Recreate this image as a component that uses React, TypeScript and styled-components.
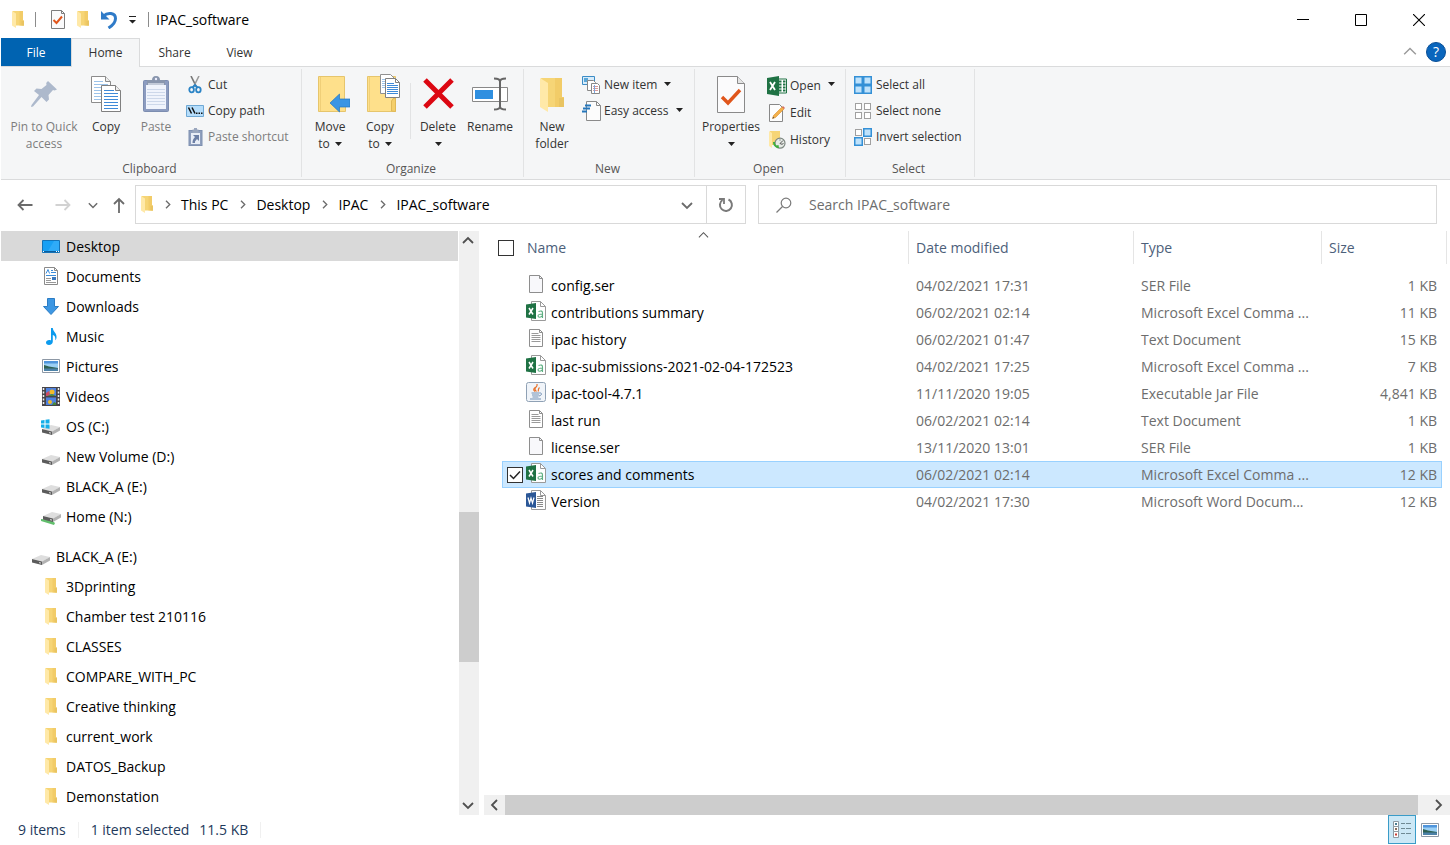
import React from "react";
import styled, { createGlobalStyle, css } from "styled-components";

const GlobalStyle = createGlobalStyle`
  *, *::before, *::after { box-sizing: border-box; }
  body { margin: 0; background: #fff; color: #000; }
  body, button, input { font-family: "Open Sans", "Noto Sans", sans-serif; font-size: 14px; line-height: 20px; }
  h1, h2 { margin: 0; font-weight: 400; font-size: inherit; }
  ul { margin: 0; padding: 0; list-style: none; }
  svg { display: block; flex: none; }
`;

/* ---------- icons ---------- */

const Folder = ({ w = 12, h = 17 }: { w?: number; h?: number }) => (
  <svg width={w} height={h} viewBox="0 0 24 34" aria-hidden="true">
    <path d="M1 0h21v19h2v10H7z" fill="#f6d576" />
    <path d="M15 0h7v19h2v10h-9z" fill="#f2cc68" />
    <path d="M19 20h5v9h-5z" fill="#e9c462" />
    <path d="M0 0l8 5v29l-8-5z" fill="#ffe9a8" />
  </svg>
);

const PropertiesIcon = () => (
  <svg width="30" height="37" viewBox="0 0 30 37" aria-hidden="true">
    <path d="M1.500.5h20l7 7v29h-27z" fill="#fbfbfc" stroke="#8a8a8a" />
    <path d="M21.500.5v7h7" fill="#e4e4e4" stroke="#8a8a8a" />
    <path d="M6 21l6 6 12-13" fill="none" stroke="#e0561c" strokeWidth="3.400" />
  </svg>
);

const QuickProperties = () => (
  <svg width="16" height="19" viewBox="0 0 16 19" aria-hidden="true">
    <path d="M1.500.5h10l3 3v15h-13z" fill="#fafafb" stroke="#7d7d7d" />
    <path d="M11.500.5v3h3" fill="none" stroke="#7d7d7d" />
    <path d="M3.500 10l3 3L12 6.500" fill="none" stroke="#e0561c" strokeWidth="2" />
  </svg>
);

const UndoIcon = () => (
  <svg width="18" height="19" viewBox="0 0 18 19" aria-hidden="true">
    <path d="M3.500 6C7.500 2 15.500 2.500 15.500 8.500c0 4-3 7-7 9.500" fill="none" stroke="#2f7bc8" strokeWidth="3" />
    <path d="M1 1v8.500h8.500z" fill="#2f7bc8" />
  </svg>
);

const CaretDown = () => (
  <svg width="7" height="4" viewBox="0 0 7 4" aria-hidden="true">
    <path d="M0 0h7L3.500 4z" fill="#222" />
  </svg>
);

const CustomizeIcon = () => (
  <svg width="7" height="8" viewBox="0 0 7 8" aria-hidden="true">
    <path d="M0 0h7v1H0zM0 4h7L3.500 7.500z" fill="#222" />
  </svg>
);

const PinIcon = () => (
  <svg width="28" height="30" viewBox="-1 0 28 30" aria-hidden="true">
    <path d="M17 1l9 8.500-2.500 1-1.500-.5-4.500 5 .5 4.500-2.500 2.500-5-5L2 26.500l-2 .5.500-2L8 15l-5-4L5.500 8.500l5 .5L15.500 5 15.200 3z" fill="#adb9cc" />
  </svg>
);

const sheetLines = (x: number, y: number, w: number, n: number, step: number, color: string) =>
  Array.from({ length: n }, (_, i) => <path key={i} d={`M${x} ${y + i * step}h${w}`} stroke={color} />);

const CopyIcon = () => (
  <svg width="32" height="37" viewBox="-1 0 32 37" aria-hidden="true">
    <path d="M.5.5h14l5 5v21H.5z" fill="#fff" stroke="#8c8c8c" />
    <path d="M14.500.5v5h5" fill="#eee" stroke="#8c8c8c" />
    {sheetLines(3, 5.5, 9, 1, 3, "#9cc3ea")}
    {sheetLines(3, 8.5, 14, 6, 3, "#9cc3ea")}
    <path d="M10.500 9.500h14l5 5v21h-19z" fill="#fff" stroke="#808080" />
    <path d="M24.500 9.500v5h5" fill="#eee" stroke="#808080" />
    {sheetLines(13, 14.5, 10, 1, 3, "#3f8ad8")}
    {sheetLines(13, 17.5, 14, 6, 3, "#3f8ad8")}
  </svg>
);

const PasteIcon = () => (
  <svg width="28" height="37" viewBox="-1 0 28 37" aria-hidden="true">
    <rect x=".5" y="4.500" width="25" height="31" rx="1" fill="#8c9cc0" stroke="#7c8db0" />
    <path d="M3 9h20v24H3z" fill="#f0f4fc" />
    {sheetLines(4, 13.5, 18, 6, 3, "#cdd8ea")}
    <path d="M4 4h5c0-2 1-4 4-4s4 2 4 4h5v5H4z" fill="#8996ad" />
    <path d="M5 8h16" stroke="#c3cbd9" strokeWidth="2" />
    <circle cx="13" cy="3" r="1.200" fill="#eef" />
  </svg>
);

const CutIcon = () => (
  <svg width="14" height="18" viewBox="0 0 14 18" aria-hidden="true">
    <path d="M3 0l5.500 11" stroke="#777" strokeWidth="1.600" />
    <path d="M11 0L5.500 11" stroke="#9a9a9a" strokeWidth="1.600" />
    <ellipse cx="3.600" cy="13.800" rx="2.300" ry="2.600" fill="none" stroke="#2b84c6" strokeWidth="1.800" />
    <ellipse cx="10.400" cy="13.800" rx="2.300" ry="2.600" fill="none" stroke="#2b84c6" strokeWidth="1.800" />
    <path d="M4.500 11.500L7 9l2.500 2.500" fill="none" stroke="#2b84c6" strokeWidth="1.800" />
  </svg>
);

const CopyPathIcon = () => (
  <svg width="18" height="12" viewBox="0 0 18 12" aria-hidden="true">
    <path d="M.5.5h17v11H.5z" fill="#b5ddfb" stroke="#6ea8d4" />
    <path d="M2.500 2.500l3 6M6 2.500l3 6" stroke="#111" strokeWidth="1.500" />
    <path d="M10 7.500h1.500v1.500H10zM12.500 7.500H14v1.500h-1.500zM15 7.500h1.500v1.500H15z" fill="#111" />
  </svg>
);

const PasteShortcutIcon = () => (
  <svg width="15" height="18" viewBox="0 0 15 18" aria-hidden="true">
    <rect x="1" y="2.500" width="13" height="15" fill="#8f9fbd" stroke="#7e90b1" />
    <path d="M3 5h9v11H3z" fill="#e9eef7" />
    <path d="M4.500 1.500h6V5h-6z" fill="#9aa7be" />
    <path d="M6 0h3v2H6z" fill="#9aa7be" />
    <path d="M5 7h6v6L9 11 7 13.500v1.500H4.500c0-3 1-4.500 2.500-6z" fill="#6d80a6" />
  </svg>
);

const MoveToIcon = () => (
  <svg width="40" height="37" viewBox="-8 0 40 37" aria-hidden="true">
    <path d="M.5.5h26v23h1v12H.5z" fill="#fee08b" stroke="#e6c56c" />
    <path d="M2.500 1v34" stroke="#f0cf78" />
    <path d="M12 27l9.500-9v5H32v8H21.500v5z" fill="#3a95e4" stroke="#2577bf" strokeWidth=".7" />
  </svg>
);

const CopyToIcon = () => (
  <svg width="42" height="41" viewBox="-8 0 42 41" aria-hidden="true">
    <path d="M.5 2.500h28v35H.5z" fill="#fee08b" stroke="#e6c56c" />
    <path d="M2.500 3v34" stroke="#f0cf78" />
    <path d="M24.500 37V27q1-3 4-3v13.500z" fill="#f5cf6b" stroke="#e0b958" />
    <path d="M13.500.5h10l4 4v15h-14z" fill="#fff" stroke="#909090" />
    {sheetLines(15, 5.5, 8, 5, 2, "#9cc3ea")}
    <path d="M18.500 4.500h10l4 4v15h-14z" fill="#fff" stroke="#808080" />
    <path d="M28.500 4.500v4h4" fill="none" stroke="#808080" />
    {sheetLines(20, 9.5, 7, 1, 2, "#3f8ad8")}
    {sheetLines(20, 11.5, 11, 5, 2, "#3f8ad8")}
  </svg>
);

const DeleteIcon = () => (
  <svg width="34" height="34" viewBox="-1 1 34 34" aria-hidden="true">
    <path d="M3 3l27 27M30 3L3 30" stroke="#dc0712" strokeWidth="5" />
  </svg>
);

const RenameIcon = () => (
  <svg width="38" height="36" viewBox="-1 0 38 36" aria-hidden="true">
    <path d="M.5 10.500h35v14H.5z" fill="#fff" stroke="#888" />
    <path d="M3 13h18v9H3z" fill="#2f8fe0" />
    <path d="M22 1.500c4 0 6 1 6 3v25c0 2-2 3-6 3M34 1.500c-4 0-6 1-6 3v25c0 2 2 3 6 3" fill="none" stroke="#666" strokeWidth="2" />
  </svg>
);

const NewItemIcon = () => (
  <svg width="18" height="18" viewBox="0 0 18 18" aria-hidden="true">
    <path d="M.5.5h12v8H.5z" fill="#d8ecfa" stroke="#3c8cc6" />
    <path d="M2 2h4v4H2z" fill="#5aa7d8" />
    <path d="M5.500 4.500h6l2 2v8h-8z" fill="#fff" stroke="#888" />
    <path d="M9.500 7.500h6l2 2v8h-8z" fill="#fff" stroke="#888" />
    {sheetLines(11, 10.5, 5, 3, 2, "#d99a9a")}
    <path d="M12.500 9v8" stroke="#7aa7df" />
  </svg>
);

const EasyAccessIcon = () => (
  <svg width="19" height="20" viewBox="0 0 19 20" aria-hidden="true">
    <path d="M4.500.5h10l4 4v15h-14z" fill="#fcfcfc" stroke="#8a8a8a" />
    <path d="M14.500.5v4h4" fill="none" stroke="#8a8a8a" />
    <path d="M3 4.500h6M1 7.500h7M0 10.500h5" stroke="#2576bb" strokeWidth="1.800" />
  </svg>
);

const ExcelApp = () => (
  <svg width="20" height="20" viewBox="0 0 20 20" aria-hidden="true">
    <path d="M10 3h9.500v14H10z" fill="#fff" stroke="#1f7244" />
    <path d="M12 5.500h2.500M16 5.500h2.500M12 8.500h2.500M16 8.500h2.500M12 11.500h2.500M16 11.500h2.500M12 14.500h2.500M16 14.500h2.500" stroke="#1f7244" strokeWidth="1.800" />
    <path d="M0 2l12-2v20L0 18z" fill="#1f7244" />
    <path d="M3 6l5 8M8 6l-5 8" stroke="#fff" strokeWidth="1.800" />
  </svg>
);

const EditIcon = () => (
  <svg width="16" height="18" viewBox="0 0 16 18" aria-hidden="true">
    <path d="M.5.5h10l3 3v14H.5z" fill="#fdfdfd" stroke="#888" />
    <path d="M3.500 14.500l1-3L13 3l2 2-8.500 8.500z" fill="#f3b04a" stroke="#d88d28" strokeWidth=".6" />
    <path d="M3.500 14.500l.6-1.800 1.200 1.200z" fill="#444" />
    <path d="M13 3l1-1 2 2-1 1z" fill="#d86b5b" />
  </svg>
);

const HistoryIcon = () => (
  <svg width="17" height="18" viewBox="0 0 17 18" aria-hidden="true">
    <path d="M1 0h10v14H1z" fill="#f6d576" />
    <path d="M0 0l3 2v15l-3-2z" fill="#ffe9a8" />
    <circle cx="11" cy="12.200" r="5" fill="#e6ebe6" stroke="#7d8780" strokeWidth="1.200" />
    <path d="M14 9.500l-3 3 2.500 1M11 8.500v1M14.500 12.500h-1" fill="none" stroke="#555" />
    <path d="M4 11c0 4 3 6 6 6l-.5-3-2 .5C6 13.500 6 12.500 6 11z" fill="#3fae3f" />
  </svg>
);

const SelectIcon = ({ on }: { on: [boolean, boolean, boolean, boolean] }) => (
  <svg width="18" height="18" viewBox="0 0 18 18" aria-hidden="true">
    {on.map((active, i) => {
      const x = (i % 2) * 9;
      const y = Math.floor(i / 2) * 9;
      return active ? (
        <rect key={i} x={x + 0.75} y={y + 0.75} width="7.500" height="7.500" fill="#bfe2fb" stroke="#3490d6" strokeWidth="1.500" />
      ) : (
        <rect key={i} x={x + 1.5} y={y + 1.5} width="6" height="6" fill="#fff" stroke="#a0a0a0" />
      );
    })}
  </svg>
);

const Arrow = ({ dir, color = "#6b6b6b" }: { dir: "left" | "right" | "up"; color?: string }) => (
  <svg width="16" height="16" viewBox="0 0 16 16" aria-hidden="true">
    <path
      d={dir === "left" ? "M15.500 8H1.500M6.500 3l-5 5 5 5" : dir === "right" ? "M.5 8h14M9.500 3l5 5-5 5" : "M8 16V2M3 7l5-5 5 5"}
      fill="none"
      stroke={color}
      strokeWidth="1.800"
    />
  </svg>
);

const chevrons = { up: "M1 8l5-5 5 5", down: "M1 4l5 5 5-5", left: "M8 1L3 6l5 5", right: "M4 1l5 5-5 5" };
const Chevron = ({ dir, size = 12, color = "#6b6b6b", weight = 1.8 }: { dir: keyof typeof chevrons; size?: number; color?: string; weight?: number }) => (
  <svg width={size} height={size} viewBox="0 0 12 12" aria-hidden="true">
    <path d={chevrons[dir]} fill="none" stroke={color} strokeWidth={weight} />
  </svg>
);

const RefreshIcon = () => (
  <svg width="16" height="16" viewBox="0 0 16 16" aria-hidden="true">
    <path d="M10.500 2.500a6 6 0 1 1-6 .5" fill="none" stroke="#7a7a7a" strokeWidth="2" />
    <path d="M1 2h5v5" fill="none" stroke="#7a7a7a" strokeWidth="1.800" />
  </svg>
);

const SearchIcon = () => (
  <svg width="16" height="16" viewBox="0 0 16 16" aria-hidden="true">
    <circle cx="10" cy="6" r="4.800" fill="none" stroke="#7a7a7a" strokeWidth="1.200" />
    <path d="M6.500 9.500L.5 15.500" stroke="#7a7a7a" strokeWidth="1.200" />
  </svg>
);

const DesktopIcon = () => (
  <svg width="18" height="13" viewBox="0 0 18 13" aria-hidden="true">
    <path d="M.5.5h17v12H.5z" fill="#18a0f4" stroke="#1473b8" />
    <path d="M12 1h5v10H6z" fill="#2fabf8" />
    <path d="M1 11.500h16" stroke="#0b5d9c" />
    <path d="M1 11.500h1M14 11.500h1M16 11.500h1" stroke="#fff" />
  </svg>
);

const DocumentIcon = () => (
  <svg width="14" height="18" viewBox="0 0 14 18" aria-hidden="true">
    <path d="M.5.5h10l3 3v14H.5z" fill="#fff" stroke="#8a8a8a" />
    <path d="M10.500.5v3h3" fill="none" stroke="#8a8a8a" />
    <path d="M2 6.500l2-4 1.500 4M7 3.500h2M7 5.500h5M2 8.500h10" fill="none" stroke="#3a8ddb" />
    <path d="M2 11.500h5M2 13.500h5M2 15.500h10" stroke="#999" />
    <path d="M8 10h4v3H8z" fill="#3a78bd" />
  </svg>
);

const DownloadIcon = () => (
  <svg width="16" height="17" viewBox="0 0 16 17" aria-hidden="true">
    <path d="M4.500.5h7v8h4L8 16.500.5 8.500h4z" fill="#3d97e3" stroke="#2b7cc4" />
  </svg>
);

const MusicIcon = () => (
  <svg width="11" height="17" viewBox="0 0 11 17" aria-hidden="true">
    <path d="M5 0h1.800C7 4 11 5 10.500 9.500c0 1-.5 2-1.200 2.800C9.800 9 8.500 7.500 6.800 7v6.500C6.800 15.500 5 17 3 17s-3-1-3-2.500S1.500 12 3.200 12c.7 0 1.300.1 1.800.4z" fill="#0c9bee" />
  </svg>
);

const PictureIcon = () => (
  <svg width="18" height="14" viewBox="0 0 18 14" aria-hidden="true">
    <path d="M.5.5h17v13H.5z" fill="#fff" stroke="#8d98a5" />
    <path d="M2 2h14v10H2z" fill="#9bd0f5" />
    <path d="M2 2h14v2.500H2z" fill="#4f95dc" />
    <path d="M2 6l5 1.500 9 1.500v1H2z" fill="#2e6153" />
    <path d="M2 9.500h14V12H2z" fill="#4c82a8" />
  </svg>
);

const VideoIcon = () => (
  <svg width="18" height="19" viewBox="0 0 18 19" aria-hidden="true">
    <path d="M0 0h18v19H0z" fill="#46444a" />
    <path d="M1.500 1v17M16.500 1v17" stroke="#eee" strokeWidth="1.500" strokeDasharray="2 1.500" />
    <path d="M4 1h10v8H4zM4 10.500h10V18H4z" fill="#4f82e0" />
    <circle cx="10" cy="5" r="2.500" fill="#f2bb2a" />
    <path d="M4 6l3-2 1 5H4z" fill="#cf4a63" />
    <circle cx="8" cy="15" r="2" fill="#f2bb2a" />
    <path d="M10 18l2-3 2 1v2zM5 9l5-2 4 2z" fill="#4a8a3a" />
  </svg>
);

const DriveIcon = ({ kind }: { kind?: "os" | "net" }) => (
  <svg width="20" height="20" viewBox="0 0 20 20" aria-hidden="true">
    {kind === "net" && <path d="M0 13l10 1 4 3-1 2-13-4z" fill="#62bf6d" />}
    <g transform={kind === "net" ? "translate(1 -3)" : undefined}>
      <path d="M1 13l9-4 9 2-8 4.500z" fill="#dedede" />
      <path d="M1 13l10 2.500V19L1 16.500z" fill="#5c5c5c" />
      <path d="M11 15.500l8-4.500v3.500L11 19z" fill="#b2b2b2" />
      <path d="M8 16.600l2 .5" stroke="#ddd" />
    </g>
    {kind === "os" && <path d="M0 4.500l3.500-.5v3.500H0zM4.500 3.800l4-.6v4.300h-4zM0 8.500h3.500V12L0 11.500zM4.500 8.500h4v4.200l-4-.5z" fill="#14aee8" />}
  </svg>
);

const FileSheet = ({ text }: { text?: boolean }) => (
  <svg width="14" height="18" viewBox="0 0 14 18" aria-hidden="true">
    <path d="M.5.5h10l3 3v14H.5z" fill={text ? "#fff" : "#f8f8fb"} stroke="#8e8e8e" />
    <path d="M10.500.5v3h3" fill="none" stroke="#8e8e8e" />
    {text && sheetLines(2.5, 4.5, 7, 1, 2, "#9a9a9a")}
    {text && sheetLines(2.5, 6.5, 9, 4, 2, "#9a9a9a")}
  </svg>
);

const CsvIcon = () => (
  <svg width="20" height="20" viewBox="0 0 20 20" aria-hidden="true">
    <path d="M5.500.5h9l5 5v14h-14z" fill="#fff" stroke="#9a9a9a" />
    <path d="M14.500.5v5h5" fill="none" stroke="#9a9a9a" />
    <path d="M0 3.500L10 2v16L0 16.500z" fill="#1f7244" />
    <path d="M3 7l4 6.500M7 7l-4 6.500" stroke="#fff" strokeWidth="1.500" />
    <path d="M12.500 10.500q4-1.500 4 1.500v5M16.500 13c-3 0-4.500.5-4.500 2s3 2 4.500-.5" fill="none" stroke="#5cae80" strokeWidth="1.100" />
  </svg>
);

const WordIcon = () => (
  <svg width="20" height="20" viewBox="0 0 20 20" aria-hidden="true">
    <path d="M5.500.5h9l5 5v14h-14z" fill="#fff" stroke="#9a9a9a" />
    <path d="M14.500.5v5h5" fill="none" stroke="#9a9a9a" />
    {sheetLines(11, 6.5, 6, 6, 2, "#8a8a8a")}
    <path d="M0 3.500L10 2v16L0 16.500z" fill="#2b5797" />
    <path d="M2 7.500l1.500 5.500L5 8l1.500 5L8 7.500" fill="none" stroke="#fff" strokeWidth="1.200" />
  </svg>
);

const JarIcon = () => (
  <svg width="20" height="20" viewBox="0 0 20 20" aria-hidden="true">
    <rect x=".5" y=".5" width="19" height="19" rx="2" fill="#f0f4f9" stroke="#8fa1b5" />
    <path d="M10.500 9.500C8 7.500 9 6 10.500 4.500 11.500 3.500 11 2.500 11 2M9 9.500C6.500 8 8 6.500 9.500 5.200M12 9.500c1-1.500-.5-2 1.500-4" fill="none" stroke="#e8732c" strokeWidth="1.200" />
    <path d="M5.500 11h8M6 13h7M6.500 15h6M4 17h11" stroke="#7391b5" />
    <path d="M13.500 11c3-.5 2.500 2.500-.5 3" fill="none" stroke="#7391b5" />
  </svg>
);

const DetailsIcon = () => (
  <svg width="19" height="17" viewBox="0 0 19 17" aria-hidden="true">
    <path d="M.5.5h5v5h-5zM.5 5.500h5v5h-5zM.5 10.500h5v6h-5z" fill="#fff" stroke="#8e9aa2" />
    <path d="M2 2h2v2H2z" fill="#4a7f95" />
    <path d="M2 7h2v2H2z" fill="#8a6d5a" />
    <path d="M2 12.500h2v2H2z" fill="#c83c32" />
    <path d="M8 2.500h4M13 2.500h5M8 7.500h4M13 7.500h5M8 12.500h4M13 12.500h5" stroke="#6f8a94" />
  </svg>
);

/* ---------- layout ---------- */

const Window = styled.div`
  min-height: 100vh;
  display: flex;
  flex-direction: column;
  padding-left: 1px;
  background: #fff;
`;

const PlainButton = styled.button`
  display: flex;
  align-items: center;
  justify-content: center;
  padding: 0;
  border: 0;
  background: transparent;
  color: inherit;
`;

const TitleBar = styled.header`
  display: flex;
  align-items: center;
  height: 38px;
  padding: 1px 2px 0 11px;
`;
const Rule = styled.span<{ $left: number; $right: number }>`
  width: 1px;
  height: 15px;
  margin: 0 ${(p) => p.$right}px 0 ${(p) => p.$left}px;
  background: #8c8c8c;
`;
const QuickTools = styled.div`
  display: flex;
  align-items: center;
  gap: 11px;
`;
const Title = styled.h1`
  flex: 1;
`;
const WindowButton = styled(PlainButton)`
  width: 58px;
  height: 37px;
`;

const Tabs = styled.nav`
  display: flex;
  height: 29px;
  border-bottom: 1px solid #dadbdc;
`;
const Tab = styled.button<{ $kind?: "file" | "active"; $narrow?: boolean }>`
  width: ${(p) => (p.$narrow ? 61 : 69)}px;
  height: 29px;
  padding: 0;
  border: 0;
  font-size: 12px;
  color: #333;
  background: transparent;
  ${(p) => p.$kind === "file" && css`width: 70px; height: 28px; padding-top: 1px; background: #0063b1; color: #fff;`}
  ${(p) => p.$kind === "active" && css`border: 1px solid #dadbdc; border-bottom: 0; background: #f5f6f7;`}
`;
const TabTools = styled.div`
  display: flex;
  align-items: center;
  gap: 9px;
  margin-left: auto;
  padding-right: 4px;
`;
const Help = styled(PlainButton)`
  width: 20px;
  height: 20px;
  border-radius: 50%;
  background: #0a66bd;
  border: 1px solid #0a4f96;
  color: #fff;
`;

const Ribbon = styled.div`
  display: flex;
  height: 113px;
  padding-top: 2px;
  border-bottom: 1px solid #dadbdc;
  background: #f5f6f7;
  font-size: 12px;
`;
const GroupBox = styled.section<{ $width: number }>`
  display: flex;
  flex-direction: column;
  flex: none;
  width: ${(p) => p.$width}px;
  height: 108px;
  border-right: 1px solid #e2e3e4;
`;
const GroupBody = styled.div<{ $left: number }>`
  display: flex;
  flex: 1;
  padding: 2px 0 0 ${(p) => p.$left}px;
`;
const GroupLabel = styled.h2`
  height: 18px;
  padding-right: 3px;
  line-height: 20px;
  text-align: center;
  color: #555;
`;
const BigButton = styled.button<{ $width?: number; $off?: boolean }>`
  display: flex;
  flex-direction: column;
  align-items: center;
  width: ${(p) => p.$width ?? 50}px;
  padding: 0;
  border: 0;
  background: transparent;
  font-size: 12px;
  line-height: 17px;
  white-space: nowrap;
  color: ${(p) => (p.$off ? "#7d7d7d" : "#333")};
`;
const BigIcon = styled.span`
  display: flex;
  align-items: center;
  height: 47px;
`;
const LabelLine = styled.span`
  display: flex;
  align-items: center;
  justify-content: center;
  gap: 5px;
  min-height: 17px;
`;
const SmallColumn = styled.div<{ $left: number }>`
  display: flex;
  flex-direction: column;
  padding-top: 1px;
  margin-left: ${(p) => p.$left}px;
`;
const SmallButton = styled.button<{ $off?: boolean; $tall?: boolean }>`
  display: flex;
  align-items: center;
  gap: 4px;
  height: ${(p) => (p.$tall ? 27 : 26)}px;
  padding: 0;
  border: 0;
  background: transparent;
  font-size: 12px;
  white-space: nowrap;
  color: ${(p) => (p.$off ? "#7d7d7d" : "#333")};
  & > svg { margin: 0 0 3px 3px; }
`;
const SmallIcon = styled.span`
  display: flex;
  justify-content: center;
  width: 18px;
`;
const GroupRule = styled.span`
  width: 1px;
  height: 56px;
  margin: 12px 2px 0 5px;
  background: #e2e3e4;
`;

const AddressRow = styled.div`
  display: grid;
  grid-template-columns: 122px 611fr 679fr;
  align-items: center;
  gap: 12px;
  height: 51px;
  padding: 0 13px 2px 0;
`;
const NavButtons = styled.div`
  display: flex;
  align-items: center;
  padding-left: 16px;
  gap: 22px;
`;
const UpGroup = styled.span`
  display: flex;
  align-items: center;
  gap: 13px;
  margin-left: -5px;
`;
const AddressBox = styled.div`
  display: flex;
  align-items: center;
  height: 39px;
  padding-left: 5px;
  border: 1px solid #d9d9d9;
`;
const Crumb = styled(PlainButton)`
  white-space: nowrap;
`;
const CrumbGap = styled.span`
  display: flex;
  justify-content: center;
  width: 28px;
`;
const AddressEnd = styled.span`
  display: flex;
  align-items: center;
  align-self: stretch;
  margin-left: auto;
`;
const EndButton = styled(PlainButton)<{ $ruled?: boolean }>`
  align-self: stretch;
  width: 39px;
  border-left: ${(p) => (p.$ruled ? "1px solid #d9d9d9" : "0")};
`;
const SearchBox = styled.label`
  display: flex;
  align-items: center;
  gap: 17px;
  height: 39px;
  padding-left: 17px;
  border: 1px solid #d9d9d9;
`;
const SearchInput = styled.input`
  flex: 1;
  min-width: 0;
  padding: 0;
  border: 0;
  outline: 0;
  background: transparent;
  &::placeholder { color: #6d6d6d; opacity: 1; }
`;

const Body = styled.div`
  display: flex;
  flex: 1;
`;
const Sidebar = styled.nav`
  flex: none;
  width: 457px;
`;
const TreeItem = styled.li<{ $root?: boolean; $selected?: boolean }>`
  margin-top: ${(p) => (p.$root ? 10 : 0)}px;
  background: ${(p) => (p.$selected ? "#d9d9d9" : "transparent")};
  & > button { padding-left: ${(p) => (p.$root ? 30 : 40)}px; }
`;
const TreeButton = styled.button`
  display: flex;
  align-items: center;
  gap: 5px;
  width: 100%;
  height: 30px;
  border: 0;
  background: transparent;
  text-align: left;
  color: #000;
`;
const TreeIcon = styled.span`
  display: flex;
  justify-content: center;
  width: 20px;
`;
const TreeLabel = styled.span`
  padding-top: 2px;
`;

const Scroller = styled.div<{ $horizontal?: boolean }>`
  display: flex;
  flex: none;
  flex-direction: ${(p) => (p.$horizontal ? "row" : "column")};
  ${(p) => (p.$horizontal ? css`height: 20px; padding-right: 2px;` : css`width: 20px; margin-left: 1px; padding-right: 2px;`)}
  background: #f0f0f0;
`;
const ScrollButton = styled(PlainButton)`
  flex: none;
  min-width: 18px;
  height: 20px;
`;
const HorizontalEnd = styled(ScrollButton)`
  width: 21px;
`;
const Track = styled.span<{ $grow: number; $thumb?: boolean }>`
  flex: ${(p) => p.$grow} 1 0;
  margin-right: ${(p) => (p.$thumb ? -2 : 0)}px;
  background: ${(p) => (p.$thumb ? "#cdcdcd" : "transparent")};
`;

const Main = styled.main`
  display: flex;
  flex: 1;
  flex-direction: column;
  min-width: 0;
  margin-left: 5px;
`;
const FileArea = styled.div`
  flex: 1;
  padding: 0 8px 0 18px;
`;
const FileTable = styled.table`
  width: 100%;
  table-layout: fixed;
  border-collapse: collapse;
`;
const Head = styled.th<{ $last?: boolean; $plain?: boolean }>`
  position: relative;
  height: 33px;
  padding: 0 0 0 7px;
  text-align: left;
  font-weight: 400;
  color: #4c607a;
  ${(p) => !p.$plain && css`
    &::after {
      content: "";
      position: absolute;
      top: 0;
      right: ${p.$last ? -5 : 0}px;
      width: 1px;
      height: 33px;
      background: #e5e5e5;
    }
  `}
`;
const NameHead = styled(Head)`
  padding-left: 1px;
`;
const SortMark = styled.span`
  position: absolute;
  top: -1px;
  left: calc(50% - 20px);
`;
const Tick = styled.input<{ $lead?: number }>`
  display: block;
  appearance: none;
  width: 16px;
  height: 16px;
  margin: 0 0 0 ${(p) => p.$lead ?? 0}px;
  border: 1px solid #333;
  background: #fff;
  &:checked {
    background: #fff url("data:image/svg+xml,%3Csvg xmlns='http://www.w3.org/2000/svg' viewBox='0 0 14 14'%3E%3Cpath d='M2 7l3.500 3.500L12 3.500' fill='none' stroke='%23222' stroke-width='1.500'/%3E%3C/svg%3E") center / 14px 14px;
  }
`;
const Spacer = styled.tr`
  height: 8px;
`;
const Row = styled.tr<{ $selected?: boolean }>`
  height: 27px;
  ${(p) => p.$selected && css`
    background: #cce8ff;
    outline: 1px solid #99d1ff;
    outline-offset: -1px;
  `}
`;
const Cell = styled.td<{ $end?: boolean }>`
  padding: 0 ${(p) => (p.$end ? 5 : 0)}px 0 7px;
  text-align: ${(p) => (p.$end ? "right" : "left")};
  white-space: nowrap;
  color: #6d6d6d;
`;
const BareCell = styled.td`
  padding: 0;
`;
const FileName = styled.span`
  display: flex;
  align-items: center;
  gap: 5px;
  color: #000;
  white-space: nowrap;
`;
const FileIcon = styled(TreeIcon)`
  padding-bottom: 3px;
`;

const StatusBar = styled.footer`
  display: flex;
  align-items: center;
  height: 30px;
  padding: 0 11px 0 17px;
  color: #1e395b;
`;
const StatusRule = styled.span`
  width: 1px;
  height: 16px;
  margin: 0 12px;
  background: #f0f0f0;
`;
const StatusText = styled.span<{ $gap?: boolean }>`
  margin-left: ${(p) => (p.$gap ? 10 : 0)}px;
`;
const ViewButtons = styled.div`
  display: flex;
  align-items: center;
  align-self: flex-start;
  gap: 5px;
  margin-left: auto;
`;
const ViewButton = styled(PlainButton)<{ $on?: boolean }>`
  height: 29px;
  ${(p) => p.$on && css`width: 28px; border: 1px solid #3a9cc8; background: #cce8f6;`}
`;

/* ---------- data ---------- */

const tree: { name: string; icon: React.ReactNode; root?: boolean; selected?: boolean }[] = [
  { name: "Desktop", icon: <DesktopIcon />, selected: true },
  { name: "Documents", icon: <DocumentIcon /> },
  { name: "Downloads", icon: <DownloadIcon /> },
  { name: "Music", icon: <MusicIcon /> },
  { name: "Pictures", icon: <PictureIcon /> },
  { name: "Videos", icon: <VideoIcon /> },
  { name: "OS (C:)", icon: <DriveIcon kind="os" /> },
  { name: "New Volume (D:)", icon: <DriveIcon /> },
  { name: "BLACK_A (E:)", icon: <DriveIcon /> },
  { name: "Home (N:)", icon: <DriveIcon kind="net" /> },
  { name: "BLACK_A (E:)", icon: <DriveIcon />, root: true },
  ...["3Dprinting", "Chamber test 210116", "CLASSES", "COMPARE_WITH_PC", "Creative thinking", "current_work", "DATOS_Backup", "Demonstation"].map(
    (name) => ({ name, icon: <Folder /> })
  ),
];

const fileIcons = { ser: <FileSheet />, csv: <CsvIcon />, txt: <FileSheet text />, jar: <JarIcon />, doc: <WordIcon /> };
const types = {
  ser: "SER File",
  csv: "Microsoft Excel Comma ...",
  txt: "Text Document",
  jar: "Executable Jar File",
  doc: "Microsoft Word Docum...",
};
const files: { name: string; date: string; kind: keyof typeof types; size: string; selected?: boolean }[] = [
  { name: "config.ser", date: "04/02/2021 17:31", kind: "ser", size: "1 KB" },
  { name: "contributions summary", date: "06/02/2021 02:14", kind: "csv", size: "11 KB" },
  { name: "ipac history", date: "06/02/2021 01:47", kind: "txt", size: "15 KB" },
  { name: "ipac-submissions-2021-02-04-172523", date: "04/02/2021 17:25", kind: "csv", size: "7 KB" },
  { name: "ipac-tool-4.7.1", date: "11/11/2020 19:05", kind: "jar", size: "4,841 KB" },
  { name: "last run", date: "06/02/2021 02:14", kind: "txt", size: "1 KB" },
  { name: "license.ser", date: "13/11/2020 13:01", kind: "ser", size: "1 KB" },
  { name: "scores and comments", date: "06/02/2021 02:14", kind: "csv", size: "12 KB", selected: true },
  { name: "Version", date: "04/02/2021 17:30", kind: "doc", size: "12 KB" },
];

const crumbs = ["This PC", "Desktop", "IPAC", "IPAC_software"];

/* ---------- parts ---------- */

const Group = ({ label, width, left, children }: { label: string; width: number; left: number; children: React.ReactNode }) => (
  <GroupBox $width={width}>
    <GroupBody $left={left}>{children}</GroupBody>
    <GroupLabel>{label}</GroupLabel>
  </GroupBox>
);

const Big = ({ icon, lines, menu, width, off }: { icon: React.ReactNode; lines: string[]; menu?: boolean; width?: number; off?: boolean }) => (
  <BigButton type="button" $width={width} $off={off}>
    <BigIcon>{icon}</BigIcon>
    {lines.map((line, i) => (
      <LabelLine key={i}>
        {line}
        {menu && i === lines.length - 1 && <CaretDown />}
      </LabelLine>
    ))}
  </BigButton>
);

const Small = ({ icon, label, menu, off, tall }: { icon: React.ReactNode; label: string; menu?: boolean; off?: boolean; tall?: boolean }) => (
  <SmallButton type="button" $off={off} $tall={tall}>
    <SmallIcon>{icon}</SmallIcon>
    {label}
    {menu && <CaretDown />}
  </SmallButton>
);

export default function App() {
  return (
    <Window>
      <GlobalStyle />
      <TitleBar>
        <Folder />
        <Rule $left={11} $right={14} />
        <QuickTools>
          <PlainButton type="button" aria-label="Properties"><QuickProperties /></PlainButton>
          <PlainButton type="button" aria-label="New folder"><Folder /></PlainButton>
          <PlainButton type="button" aria-label="Undo"><UndoIcon /></PlainButton>
          <PlainButton type="button" aria-label="Customize toolbar"><CustomizeIcon /></PlainButton>
        </QuickTools>
        <Rule $left={12} $right={7} />
        <Title>IPAC_software</Title>
        <WindowButton type="button" aria-label="Minimize">
          <svg width="12" height="12" viewBox="0 0 12 12"><path d="M0 5.500h12" stroke="#000" /></svg>
        </WindowButton>
        <WindowButton type="button" aria-label="Maximize">
          <svg width="12" height="12" viewBox="0 0 12 12"><path d="M.5.5h11v11H.5z" fill="none" stroke="#000" /></svg>
        </WindowButton>
        <WindowButton type="button" aria-label="Close">
          <svg width="12" height="12" viewBox="0 0 12 12"><path d="M0 0l12 12M12 0L0 12" stroke="#000" strokeWidth="1.100" /></svg>
        </WindowButton>
      </TitleBar>

      <Tabs aria-label="Ribbon tabs">
        <Tab type="button" $kind="file">File</Tab>
        <Tab type="button" $kind="active">Home</Tab>
        <Tab type="button">Share</Tab>
        <Tab type="button" $narrow>View</Tab>
        <TabTools>
          <PlainButton type="button" aria-label="Collapse ribbon"><Chevron dir="up" size={14} color="#9a9a9a" weight={1.2} /></PlainButton>
          <Help type="button">?</Help>
        </TabTools>
      </Tabs>

      <Ribbon>
        <Group label="Clipboard" width={301} left={6}>
          <Big icon={<PinIcon />} lines={["Pin to Quick", "access"]} width={74} off />
          <Big icon={<CopyIcon />} lines={["Copy"]} />
          <Big icon={<PasteIcon />} lines={["Paste"]} off />
          <SmallColumn $left={5}>
            <Small icon={<CutIcon />} label="Cut" />
            <Small icon={<CopyPathIcon />} label="Copy path" />
            <Small icon={<PasteShortcutIcon />} label="Paste shortcut" off />
          </SmallColumn>
        </Group>
        <Group label="Organize" width={222} left={3}>
          <Big icon={<MoveToIcon />} lines={["Move", "to"]} menu />
          <Big icon={<CopyToIcon />} lines={["Copy", "to"]} menu />
          <GroupRule />
          <Big icon={<DeleteIcon />} lines={["Delete", ""]} menu />
          <Big icon={<RenameIcon />} lines={["Rename"]} width={54} />
        </Group>
        <Group label="New" width={171} left={3}>
          <Big icon={<Folder w={24} h={34} />} lines={["New", "folder"]} />
          <SmallColumn $left={5}>
            <Small icon={<NewItemIcon />} label="New item" menu />
            <Small icon={<EasyAccessIcon />} label="Easy access" menu />
          </SmallColumn>
        </Group>
        <Group label="Open" width={151} left={3}>
          <Big icon={<PropertiesIcon />} lines={["Properties", ""]} menu width={66} />
          <SmallColumn $left={4}>
            <Small icon={<ExcelApp />} label="Open" menu tall />
            <Small icon={<EditIcon />} label="Edit" tall />
            <Small icon={<HistoryIcon />} label="History" tall />
          </SmallColumn>
        </Group>
        <Group label="Select" width={129} left={0}>
          <SmallColumn $left={8}>
            <Small icon={<SelectIcon on={[true, true, true, true]} />} label="Select all" />
            <Small icon={<SelectIcon on={[false, false, false, false]} />} label="Select none" />
            <Small icon={<SelectIcon on={[false, true, true, false]} />} label="Invert selection" />
          </SmallColumn>
        </Group>
      </Ribbon>

      <AddressRow>
        <NavButtons>
          <PlainButton type="button" aria-label="Back"><Arrow dir="left" /></PlainButton>
          <PlainButton type="button" aria-label="Forward"><Arrow dir="right" color="#d2d2d2" /></PlainButton>
          <UpGroup>
            <PlainButton type="button" aria-label="Recent locations"><Chevron dir="down" size={10} /></PlainButton>
            <PlainButton type="button" aria-label="Up"><Arrow dir="up" /></PlainButton>
          </UpGroup>
        </NavButtons>
        <AddressBox>
          <Folder />
          {crumbs.map((name) => (
            <React.Fragment key={name}>
              <CrumbGap><Chevron dir="right" size={9} /></CrumbGap>
              <Crumb type="button">{name}</Crumb>
            </React.Fragment>
          ))}
          <AddressEnd>
            <EndButton type="button" aria-label="Previous locations"><Chevron dir="down" /></EndButton>
            <EndButton type="button" aria-label="Refresh" $ruled><RefreshIcon /></EndButton>
          </AddressEnd>
        </AddressBox>
        <SearchBox>
          <SearchIcon />
          <SearchInput type="text" aria-label="Search" placeholder="Search IPAC_software" />
        </SearchBox>
      </AddressRow>

      <Body>
        <Sidebar aria-label="Folders">
          <ul>
            {tree.map((item, i) => (
              <TreeItem key={i} $root={item.root} $selected={item.selected}>
                <TreeButton type="button">
                  <TreeIcon>{item.icon}</TreeIcon>
                  <TreeLabel>{item.name}</TreeLabel>
                </TreeButton>
              </TreeItem>
            ))}
          </ul>
        </Sidebar>
        <Scroller>
          <ScrollButton type="button" aria-label="Scroll up"><Chevron dir="up" color="#505050" /></ScrollButton>
          <Track $grow={261} />
          <Track $grow={150} $thumb />
          <Track $grow={133} />
          <ScrollButton type="button" aria-label="Scroll down"><Chevron dir="down" color="#505050" /></ScrollButton>
        </Scroller>
        <Main>
          <FileArea>
            <FileTable>
              <colgroup>
                <col style={{ width: 24 }} />
                <col />
                <col style={{ width: 225 }} />
                <col style={{ width: 188 }} />
                <col style={{ width: 120 }} />
              </colgroup>
              <thead>
                <tr>
                  <NameHead $plain><Tick type="checkbox" aria-label="Select all items" $lead={-5} /></NameHead>
                  <NameHead>
                    Name
                    <SortMark><Chevron dir="up" size={11} color="#555" weight={1.1} /></SortMark>
                  </NameHead>
                  <Head>Date modified</Head>
                  <Head>Type</Head>
                  <Head $last>Size</Head>
                </tr>
              </thead>
              <tbody>
                <Spacer aria-hidden="true"><BareCell colSpan={5} /></Spacer>
                {files.map((file) => (
                  <Row key={file.name} $selected={file.selected}>
                    <BareCell>
                      {file.selected && <Tick type="checkbox" aria-label={file.name} defaultChecked $lead={5} />}
                    </BareCell>
                    <BareCell>
                      <FileName>
                        <FileIcon>{fileIcons[file.kind]}</FileIcon>
                        {file.name}
                      </FileName>
                    </BareCell>
                    <Cell>{file.date}</Cell>
                    <Cell>{types[file.kind]}</Cell>
                    <Cell $end>{file.size}</Cell>
                  </Row>
                ))}
              </tbody>
            </FileTable>
          </FileArea>
          <Scroller $horizontal>
            <HorizontalEnd type="button" aria-label="Scroll left"><Chevron dir="left" color="#505050" /></HorizontalEnd>
            <Track $grow={913} $thumb />
            <Track $grow={11} />
            <HorizontalEnd type="button" aria-label="Scroll right"><Chevron dir="right" color="#505050" /></HorizontalEnd>
          </Scroller>
        </Main>
      </Body>

      <StatusBar>
        <StatusText>9 items</StatusText>
        <StatusRule />
        <StatusText>1 item selected</StatusText>
        <StatusText $gap>11.5 KB</StatusText>
        <StatusRule />
        <ViewButtons>
          <ViewButton type="button" aria-label="Details view" $on><DetailsIcon /></ViewButton>
          <ViewButton type="button" aria-label="Large icons view"><PictureIcon /></ViewButton>
        </ViewButtons>
      </StatusBar>
    </Window>
  );
}
